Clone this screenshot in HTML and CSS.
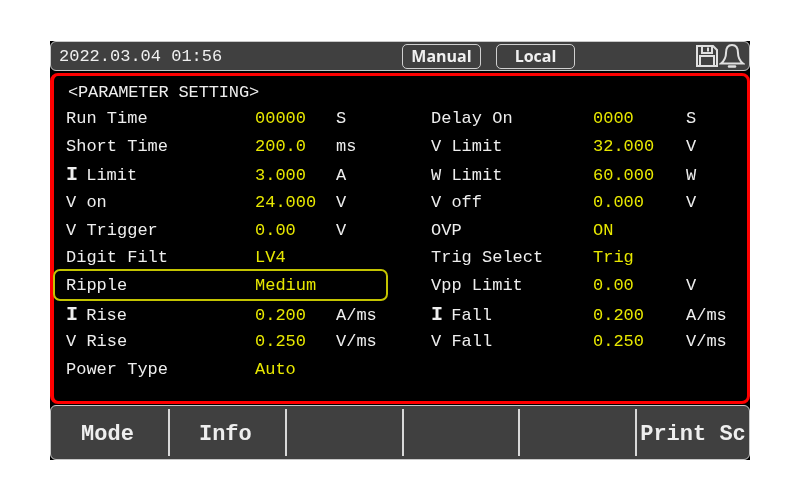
FILE: index.html
```html
<!DOCTYPE html>
<html lang="en">

<head>
    <meta charset="UTF-8">
    <title>Parameter Setting</title>
    <link rel="stylesheet" href="styles.css">
</head>

<body>
    <div class="screen">
        <div class="top-bar">
            <span class="clock">2022.03.04 01:56</span>
            <span class="tag">Manual</span>
            <span class="tag">Local</span>
            <div class="icons">
                <!-- floppy -->
                <svg width="24" height="24" viewBox="0 0 24 24" fill="none" stroke="#e0e0e0" stroke-width="2">
                    <path d="M2 2H18L22 6V22H2Z" />
                    <path d="M7 2V9H17V2" />
                    <path d="M5 22V12H19V22" />
                    <path d="M13 3.500V7.500" />
                </svg>
                <!-- bell -->
                <svg width="26" height="26" viewBox="0 0 26 26" fill="none" stroke="#e0e0e0" stroke-width="2">
                    <path d="M13 2C8.500 2 7 6 7 10C7 15 5 18 2 20.500H24C21 18 19 15 19 10C19 6 17.500 2 13 2Z" />
                    <path d="M10 23.500H16" stroke-width="2.500" stroke-linecap="round" />
                </svg>
            </div>
        </div>

        <div class="panel">
            <div class="params">
                <div class="title">&lt;PARAMETER SETTING&gt;</div>

                <span>Run Time</span><span class="val">00000</span><span>S</span>
                <span>Delay On</span><span class="val">0000</span><span>S</span>

                <span>Short Time</span><span class="val">200.0</span><span>ms</span>
                <span>V Limit</span><span class="val">32.000</span><span>V</span>

                <span class="i-label"><b class="big-i">I</b> Limit</span><span class="val">3.000</span><span>A</span>
                <span>W Limit</span><span class="val">60.000</span><span>W</span>

                <span>V on</span><span class="val">24.000</span><span>V</span>
                <span>V off</span><span class="val">0.000</span><span>V</span>

                <span>V Trigger</span><span class="val">0.00</span><span>V</span>
                <span>OVP</span><span class="val">ON</span><span></span>

                <span>Digit Filt</span><span class="val">LV4</span><span></span>
                <span>Trig Select</span><span class="val">Trig</span><span></span>

                <div class="selected">
                    <span>Ripple</span><span class="val">Medium</span>
                </div>
                <span>Vpp Limit</span><span class="val">0.00</span><span>V</span>

                <span class="i-label"><b class="big-i">I</b> Rise</span><span class="val">0.200</span><span>A/ms</span>
                <span class="i-label"><b class="big-i">I</b> Fall</span><span class="val">0.200</span><span>A/ms</span>

                <span>V Rise</span><span class="val">0.250</span><span>V/ms</span>
                <span>V Fall</span><span class="val">0.250</span><span>V/ms</span>

                <span>Power Type</span><span class="val">Auto</span>
            </div>
        </div>

        <div class="menu">
            <div class="menu-btn">Mode</div>
            <div class="menu-btn">Info</div>
            <div class="menu-btn"></div>
            <div class="menu-btn"></div>
            <div class="menu-btn"></div>
            <div class="menu-btn">Print Sc</div>
        </div>
    </div>
</body>

</html>
```
FILE: styles.css
```css
body {
    margin: 0;
    padding: 41px 50px;
    background: #fff;
    font-family: "Liberation Mono", monospace;
}

.screen {
    display: flex;
    flex-direction: column;
    width: 700px;
    height: 419px;
    background: #000;
    filter: blur(0.4px);
}

.top-bar {
    display: flex;
    align-items: center;
    height: 30px;
    box-sizing: border-box;
    border: 1px solid #c8c8c8;
    border-radius: 6px;
    background: #404040;
    color: #f0f0f0;
}

.clock {
    width: 351px;
    padding-left: 8px;
    box-sizing: border-box;
    font-size: 17px;
}

.tag {
    display: flex;
    justify-content: center;
    align-items: center;
    width: 79px;
    height: 25px;
    box-sizing: border-box;
    margin-right: 15px;
    border: 1px solid #d0d0d0;
    border-radius: 5px;
    font-family: "Open Sans", sans-serif;
    font-size: 16px;
    font-weight: 700;
}

.icons {
    display: flex;
    align-items: center;
    margin-left: auto;
    margin-right: 4px;
}

.panel {
    flex: 1;
    margin-top: 2px;
    border: 3px solid #f00;
    border-left-width: 4px;
    border-radius: 8px;
    color: #eee;
    font-size: 17px;
}

.params {
    display: grid;
    grid-template-columns: 189px 81px 95px 162px 93px 1fr;
    grid-template-rows: 25px 26px 30px 28px 26px 30px 24px 32px 28px 24px 32px;
    padding: 4px 0 0 12px;
}

.params > span {
    align-self: center;
}

.title {
    grid-column: 1 / -1;
    align-self: center;
    padding-left: 2px;
    letter-spacing: -0.15px;
}

.val {
    color: #e8e800;
}

.i-label {
    word-spacing: -2px;
}

.big-i {
    font-size: 20px;
    line-height: 17px;
}

.selected {
    grid-column: 1 / 4;
    display: grid;
    grid-template-columns: 189px 1fr;
    align-items: center;
    margin: 0 43px 0 -13px;
    padding-left: 11px;
    box-sizing: border-box;
    border: 2px solid #c4c400;
    border-radius: 7px;
}

.menu {
    display: grid;
    grid-template-columns: 117px repeat(4, 116.75px) 1fr;
    height: 55px;
    box-sizing: border-box;
    margin-top: 1px;
    border: 1px solid #c8c8c8;
    border-radius: 6px;
    background: #404040;
    color: #eee;
}

.menu-btn {
    display: flex;
    justify-content: center;
    align-items: center;
    margin: 3px 0;
    padding: 3px 4px 0 0;
    border-left: 2px solid #d8d8d8;
    font-size: 22px;
    font-weight: 700;
    white-space: nowrap;
}

.menu-btn:first-child {
    border-left: none;
}

.menu-btn:last-child {
    padding-right: 0;
}
```
